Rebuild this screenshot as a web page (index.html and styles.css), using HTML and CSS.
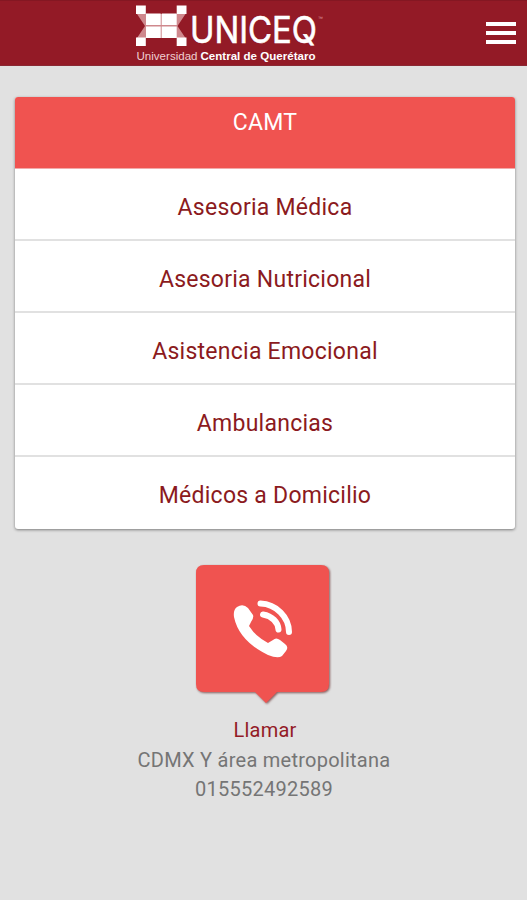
FILE: index.html
```html
<!DOCTYPE html>
<html lang="es">
<head>
    <meta charset="UTF-8">
    <title>CAMT</title>
    <link rel="stylesheet" href="styles.css">
</head>
<body>
    <header class="navbar">
        <svg class="logo" width="196" height="64" viewBox="0 0 196 64">
            <path fill="#cf888d" d="M4 14 H52.500 L44.500 26 L52.500 38 H4 L12 26 Z"/>
            <g fill="#fff">
                <rect x="3" y="5.500" width="9.800" height="8.500"/>
                <rect x="43.700" y="5.500" width="9.800" height="8.500"/>
                <rect x="3" y="37.500" width="9.800" height="8.500"/>
                <rect x="43.700" y="37.500" width="9.800" height="8.500"/>
                <rect x="13" y="13.500" width="14.700" height="11.500"/>
                <rect x="28.700" y="13.500" width="15" height="11.500"/>
                <rect x="13" y="26.500" width="14.700" height="11.500"/>
                <rect x="28.700" y="26.500" width="15" height="11.500"/>
            </g>
            <text class="logo-name" x="57" y="43" textLength="127" lengthAdjust="spacingAndGlyphs">UNICEQ</text>
            <text class="logo-tm" x="185" y="20">™</text>
            <text class="logo-sub" x="3.500" y="59.500" textLength="61" lengthAdjust="spacingAndGlyphs">Universidad</text>
            <text class="logo-sub logo-bold" x="67.500" y="59.500" textLength="115" lengthAdjust="spacingAndGlyphs">Central de Querétaro</text>
        </svg>
        <div class="menu">
            <span></span>
            <span></span>
            <span></span>
        </div>
    </header>
    <ul class="card">
        <li class="card-header">CAMT</li>
        <li>Asesoria Médica</li>
        <li>Asesoria Nutricional</li>
        <li>Asistencia Emocional</li>
        <li>Ambulancias</li>
        <li>Médicos a Domicilio</li>
    </ul>
    <div class="call">
        <svg class="call-button" width="140" height="145" viewBox="0 0 140 145">
            <path fill="#f05350" d="M10 2 H127 Q135 2 135 10 V121 Q135 129 127 129 H83 L72 140 L61 129 H10 Q2 129 2 121 V10 Q2 2 10 2 Z"/>
            <path fill="#fff" d="M43 44 Q49 40 54 45 L59 52 Q60 55 57 59 L55 63 Q61 73 74 80 L79 77 Q82 74 86 77 L91 81 Q95 84 92 88 L88 93 Q84 96 74 92 Q45 78 40 54 Q39 47 43 44 Z"/>
            <g fill="none" stroke="#fff" stroke-width="6" stroke-linecap="round">
                <path d="M66.500 40.500 C82 41 95 54 95 69"/>
                <path d="M69 51.500 C78 53 84 59 84.500 66.500"/>
            </g>
        </svg>
        <div class="call-title">Llamar</div>
        <div>CDMX Y área metropolitana</div>
        <div>015552492589</div>
    </div>
</body>
</html>
```
FILE: styles.css
```css
body {
    font-family: Roboto, sans-serif;
    margin: 0;
    background-color: #e1e1e1;
    height: 900px;
    overflow: hidden;
}
.navbar {
    display: flex;
    justify-content: space-between;
    box-sizing: border-box;
    height: 66px;
    padding: 0 11px 0 133px;
    background-color: #931a26;
    border-bottom: 1px solid #8a2833;
    border-top: 1px solid #841722;
}
.logo {
    margin-top: -1px;
    overflow: visible;
}
.logo-name {
    font-family: Inter, sans-serif;
    font-size: 37px;
    fill: #fff;
    stroke: #fff;
    stroke-width: 0.6px;
}
.logo-tm {
    font-family: "Liberation Sans", sans-serif;
    font-size: 5px;
    fill: #e0a0a4;
}
.logo-sub {
    font-family: "Liberation Sans", sans-serif;
    font-size: 10.5px;
    fill: #f0cfd1;
}
.logo-bold {
    font-weight: bold;
    fill: #fff;
}
.menu {
    display: flex;
    flex-direction: column;
    gap: 5px;
    padding-top: 21px;
}
.menu span {
    width: 30px;
    height: 4px;
    background-color: #fff;
}
.card {
    list-style: none;
    margin: 31px 12px 0 15px;
    padding: 0;
    background-color: #fff;
    border-radius: 3px;
    box-shadow: 0 1px 3px rgba(0, 0, 0, 0.45);
    overflow: hidden;
}
.card li {
    box-sizing: border-box;
    height: 72px;
    border-bottom: 2px solid #e1e1e1;
    color: #8b1a20;
    font-size: 23px;
    letter-spacing: 0.25px;
    line-height: 77px;
    text-align: center;
}
.card li:last-child {
    border-bottom: none;
}
.card .card-header {
    background-color: #f05350;
    border-bottom: 1px solid #f2aaa9;
    color: #fff;
    line-height: 51px;
}
.call {
    display: flex;
    flex-direction: column;
    align-items: center;
    margin-top: 34px;
    padding-left: 1px;
    color: #757575;
    font-size: 20px;
    letter-spacing: 0.25px;
    line-height: 29.500px;
}
.call-button {
    margin-bottom: 8px;
    filter: drop-shadow(1px 1px 1px rgba(70, 0, 0, 0.6));
}
.call-title {
    margin-left: 2px;
    color: #931a26;
}
```
